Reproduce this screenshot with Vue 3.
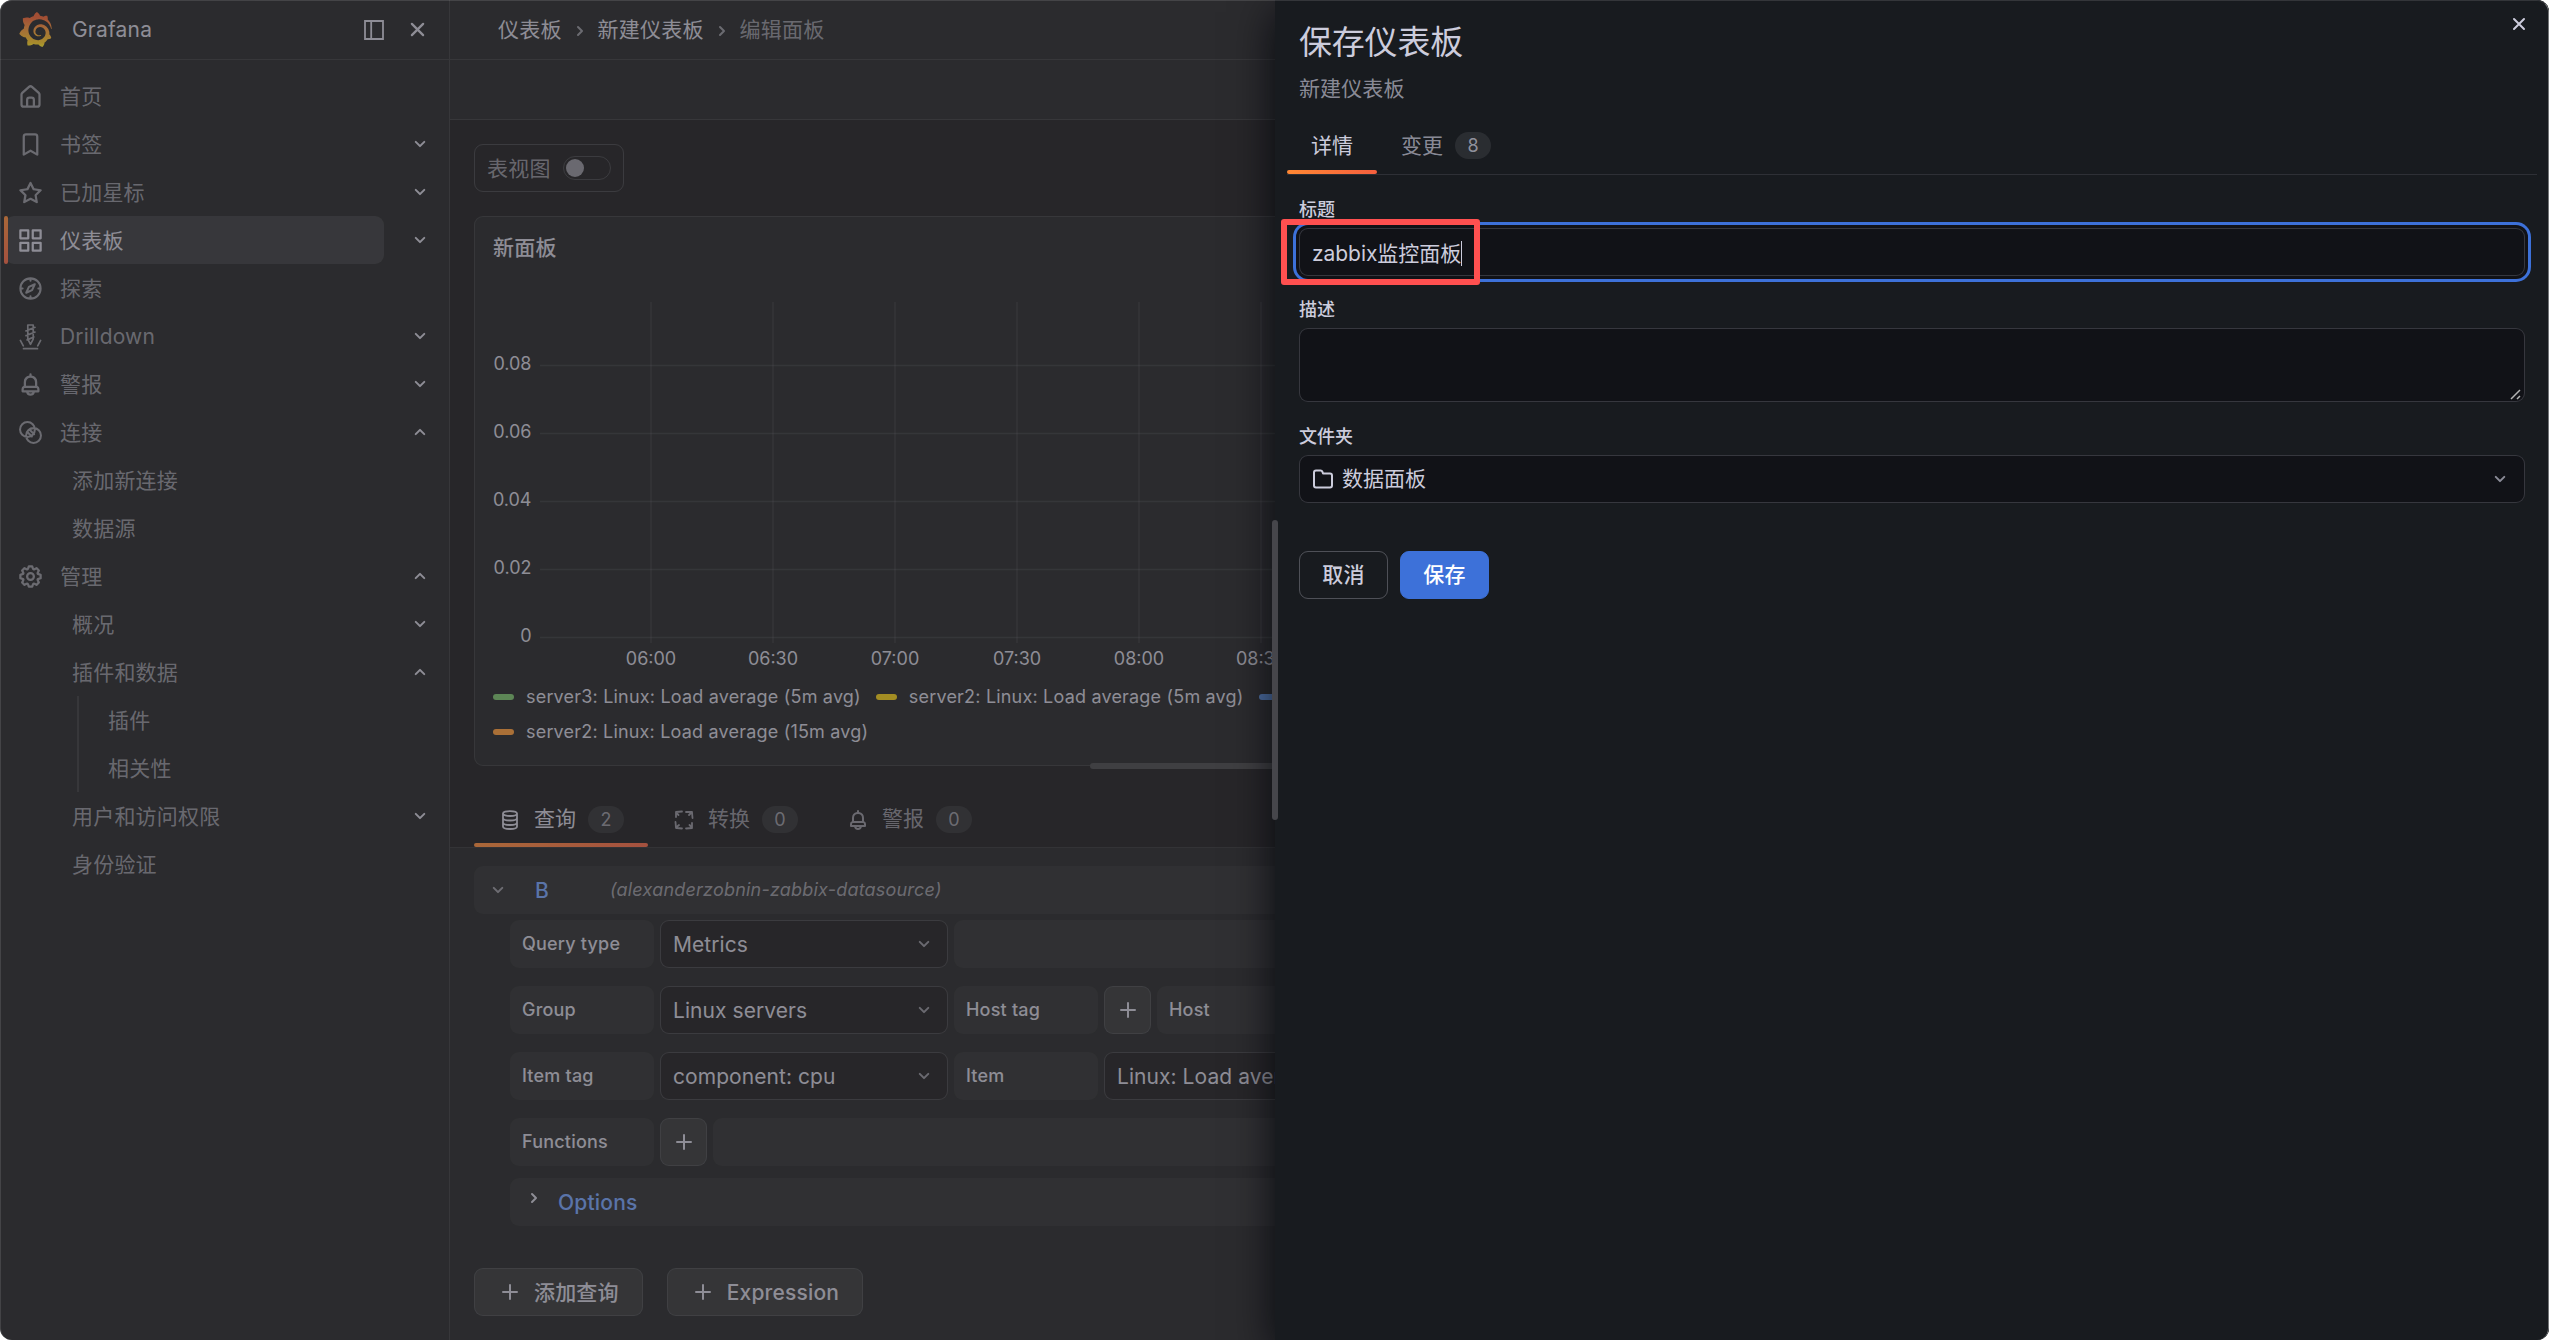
<template>
  <div class="window">
    <aside class="sidebar">
      <div class="brand">
        <svg class="logo" viewBox="0 0 24 24">
          <defs>
            <linearGradient id="logo-fill" x1="0" y1="1" x2="0" y2="0">
              <stop offset="0" stop-color="#fcee1f" />
              <stop offset="0.12" stop-color="#f9c81c" />
              <stop offset="0.55" stop-color="#f68c33" />
              <stop offset="0.85" stop-color="#f15a2b" />
              <stop offset="1" stop-color="#f05a28" />
            </linearGradient>
          </defs>
          <path fill="url(#logo-fill)" :d="logoPath" />
        </svg>
        <span class="brand-name">Grafana</span>
        <svg class="dock" viewBox="0 0 20 20">
          <path d="M1 1h18v18H1zM7.2 1v18" fill="none" stroke="currentColor" stroke-width="1.8" />
        </svg>
        <svg class="icon big" viewBox="0 0 24 24"><path class="line" d="M7 7l10 10M17 7L7 17" /></svg>
      </div>
      <nav class="nav">
        <div
          v-for="item in navItems"
          :key="item.label"
          class="nav-row"
          :class="['level-' + item.level, { active: item.active }]"
        >
          <div class="nav-link">
            <svg v-if="item.icon" class="icon big" viewBox="0 0 24 24">
              <path :class="icons[item.icon].cls || 'fill'" :d="icons[item.icon].d" />
            </svg>
            <span>{{ item.label }}</span>
          </div>
          <svg v-if="item.arrow" class="icon arrow" :class="item.arrow" viewBox="0 0 24 24">
            <path class="fill" :d="icons.angle.d" />
          </svg>
        </div>
      </nav>
    </aside>

    <main class="main">
      <div class="crumbs">
        <span>仪表板</span>
        <svg class="icon" viewBox="0 0 24 24"><path class="line" d="M10 8l4 4-4 4" /></svg>
        <span>新建仪表板</span>
        <svg class="icon" viewBox="0 0 24 24"><path class="line" d="M10 8l4 4-4 4" /></svg>
        <span class="current">编辑面板</span>
      </div>
      <div class="toolbar"></div>

      <div class="viz">
        <div class="table-view">
          <span>表视图</span>
          <i class="switch"></i>
        </div>
        <section class="panel">
          <h2>新面板</h2>
          <svg class="chart" width="1000" height="389">
            <line v-for="x in xTicks" :key="x.label" :x1="x.pos" :x2="x.pos" y1="12" y2="353" />
            <line v-for="y in yTicks" :key="y.label" x1="65" x2="1000" :y1="y.pos" :y2="y.pos" />
            <text v-for="y in yTicks" :key="y.label" x="56.5" :y="y.pos + 4.5" text-anchor="end">{{ y.label }}</text>
            <text v-for="x in xTicks" :key="x.label" :x="x.pos" y="375" text-anchor="middle">{{ x.label }}</text>
          </svg>
          <div class="legend">
            <div v-for="(row, i) in legend" :key="i" class="legend-row">
              <span v-for="s in row" :key="s.name" class="legend-item">
                <i :style="{ background: s.color }"></i>{{ s.name }}
              </span>
            </div>
          </div>
        </section>
        <div class="resizer"></div>
        <div class="tabs">
          <div v-for="t in tabs" :key="t.label" class="tab" :class="{ active: t.active }">
            <svg class="icon" viewBox="0 0 24 24">
              <path :class="icons[t.icon].cls || 'fill'" :d="icons[t.icon].d" />
            </svg>
            <span class="tab-label">{{ t.label }}</span>
            <span class="badge">{{ t.count }}</span>
          </div>
        </div>
      </div>

      <div class="queries">
        <div class="query-head">
          <svg class="icon" viewBox="0 0 24 24"><path class="fill" :d="icons.angle.d" /></svg>
          <span class="ref">B</span>
          <em>(alexanderzobnin-zabbix-datasource)</em>
        </div>
        <div class="query-body">
          <div v-for="(row, i) in rows" :key="i" class="q-row">
            <template v-for="(cell, j) in row" :key="j">
              <div v-if="cell.type === 'label'" class="q-label">{{ cell.text }}</div>
              <div v-else-if="cell.type === 'select'" class="q-select">
                <span>{{ cell.text }}</span>
                <svg class="icon" viewBox="0 0 24 24"><path class="fill" :d="icons.angle.d" /></svg>
              </div>
              <div v-else-if="cell.type === 'add'" class="q-add">
                <svg class="icon" viewBox="0 0 24 24"><path class="line" :d="icons.plus.d" /></svg>
              </div>
              <div v-else class="q-fill"></div>
            </template>
          </div>
          <div class="options">
            <svg class="icon" viewBox="0 0 24 24"><path class="line" d="M10 8l4 4-4 4" /></svg>
            <span>Options</span>
          </div>
        </div>
        <div class="actions">
          <button>
            <svg class="icon" viewBox="0 0 24 24"><path class="line" :d="icons.plus.d" /></svg>添加查询
          </button>
          <button>
            <svg class="icon" viewBox="0 0 24 24"><path class="line" :d="icons.plus.d" /></svg>Expression
          </button>
        </div>
      </div>
    </main>

    <div class="backdrop"></div>

    <section class="drawer">
      <svg class="icon close" viewBox="0 0 24 24"><path class="line" d="M7 7l10 10M17 7L7 17" /></svg>
      <h1>保存仪表板</h1>
      <p class="subtitle">新建仪表板</p>
      <div class="drawer-tabs">
        <div class="tab active"><span>详情</span></div>
        <div class="tab"><span>变更</span><span class="badge">8</span></div>
      </div>
      <div class="form">
        <label>标题</label>
        <div class="field title-field">
          <span>zabbix监控面板</span><i class="caret"></i>
          <div class="highlight"></div>
        </div>
        <label class="desc-label">描述</label>
        <div class="field desc-field">
          <svg class="grip" viewBox="0 0 12 12"><path d="M1 11L10 2M7 11l3-3" /></svg>
        </div>
        <label class="folder-label">文件夹</label>
        <div class="field folder-field">
          <svg class="icon" viewBox="0 0 24 24"><path class="fill" :d="icons.folder.d" /></svg>
          <span>数据面板</span>
          <svg class="icon chevron" viewBox="0 0 24 24"><path class="fill" :d="icons.angle.d" /></svg>
        </div>
        <div class="buttons">
          <button class="cancel">取消</button>
          <button class="save">保存</button>
        </div>
      </div>
      <div class="drag-handle"></div>
    </section>

    <div class="frame"></div>
  </div>
</template>

<script setup>
const logoPath = 'M23.02 10.59a8.578 8.578 0 0 0-.862-3.034 8.911 8.911 0 0 0-1.789-2.445c.337-1.342-.413-2.505-.413-2.505-1.292-.08-2.113.4-2.416.62-.052-.02-.102-.044-.154-.064-.22-.089-.446-.172-.677-.247-.231-.073-.47-.14-.711-.197a9.867 9.867 0 0 0-.875-.161C14.557.753 12.94 0 12.94 0c-1.804 1.145-2.147 2.744-2.147 2.744l-.018.093c-.098.029-.2.057-.298.088-.138.042-.275.094-.413.143-.138.055-.275.107-.41.166a8.869 8.869 0 0 0-1.557.87l-.063-.029c-2.497-.955-4.716.195-4.716.195-.203 2.658.996 4.33 1.235 4.636a11.608 11.608 0 0 0-.607 2.635C1.636 12.677.953 15.014.953 15.014c1.926 2.214 4.171 2.351 4.171 2.351.003-.002.006-.002.006-.005.285.509.615.994.986 1.446.156.19.32.371.488.548-.704 2.009.099 3.68.099 3.68 2.144.08 3.553-.937 3.849-1.173a9.784 9.784 0 0 0 3.164.501h.08l.055-.003.107-.002.103-.005.003.002c1.01 1.44 2.788 1.646 2.788 1.646 1.264-1.332 1.337-2.653 1.337-2.94v-.058c0-.02-.003-.039-.003-.06.265-.187.52-.387.758-.6a7.875 7.875 0 0 0 1.415-1.7c1.43.083 2.437-.885 2.437-.885-.236-1.49-1.085-2.216-1.264-2.354l-.018-.013-.016-.013a.217.217 0 0 1-.031-.02c.008-.092.016-.18.02-.27.011-.162.016-.323.016-.48v-.253l-.005-.098-.008-.135a1.891 1.891 0 0 0-.01-.13c-.003-.042-.008-.083-.013-.125l-.016-.124-.018-.122a6.215 6.215 0 0 0-2.032-3.73 6.015 6.015 0 0 0-3.222-1.46 6.292 6.292 0 0 0-.85-.048l-.107.002h-.063l-.044.003-.104.008a4.777 4.777 0 0 0-3.335 1.695c-.332.4-.592.84-.768 1.297a4.594 4.594 0 0 0-.312 1.817l.003.091c.005.055.007.11.013.164a3.615 3.615 0 0 0 .698 1.82 3.53 3.53 0 0 0 1.827 1.282c.33.098.66.14.971.137.039 0 .078 0 .114-.002l.063-.003c.02 0 .041-.003.062-.003.034-.002.065-.007.099-.01.007 0 .018-.003.028-.003l.031-.005.06-.008a1.18 1.18 0 0 0 .112-.02c.036-.008.072-.013.109-.024a2.634 2.634 0 0 0 .914-.415c.028-.02.056-.041.085-.065a.248.248 0 0 0 .039-.35.244.244 0 0 0-.309-.06l-.078.042c-.09.044-.184.083-.283.116a2.476 2.476 0 0 1-.475.096c-.028.003-.054.006-.083.006l-.083.002c-.026 0-.054 0-.08-.002l-.102-.006h-.012l-.024.006c-.016-.003-.031-.003-.044-.006-.031-.002-.06-.007-.091-.01a2.59 2.59 0 0 1-.724-.213 2.557 2.557 0 0 1-.667-.438 2.52 2.52 0 0 1-.805-1.475 2.306 2.306 0 0 1-.029-.444l.006-.122v-.023l.002-.031c.003-.021.003-.04.005-.06a3.163 3.163 0 0 1 1.352-2.29 3.12 3.12 0 0 1 .937-.43 2.946 2.946 0 0 1 .776-.101h.06l.07.002.045.003h.026l.07.005a4.041 4.041 0 0 1 1.635.49 3.94 3.94 0 0 1 1.602 1.662 3.77 3.77 0 0 1 .397 1.414l.005.076.003.075c.002.026.002.05.002.075 0 .024.003.052 0 .07v.065l-.002.073-.008.174a6.195 6.195 0 0 1-.08.639 5.1 5.1 0 0 1-.267.927 5.31 5.31 0 0 1-.624 1.13 5.052 5.052 0 0 1-3.237 2.014 4.82 4.82 0 0 1-.649.066l-.039.003h-.287a6.607 6.607 0 0 1-1.716-.265 6.776 6.776 0 0 1-3.4-2.274 6.75 6.75 0 0 1-.746-1.15 6.616 6.616 0 0 1-.714-2.596l-.005-.083-.002-.02v-.056l-.003-.073v-.096l-.003-.104v-.07l.003-.163c.008-.22.026-.45.054-.678a8.707 8.707 0 0 1 .28-1.355c.128-.444.286-.872.473-1.277a7.04 7.04 0 0 1 1.456-2.1 5.925 5.925 0 0 1 .953-.763c.169-.111.343-.213.524-.306.089-.05.182-.091.273-.135.047-.02.093-.042.138-.062a7.177 7.177 0 0 1 .714-.267l.145-.045c.049-.015.098-.026.148-.041.098-.029.197-.052.296-.076.049-.013.1-.02.15-.033l.15-.032.151-.028.076-.013.075-.01.153-.024c.057-.01.114-.013.171-.023l.169-.021c.036-.003.073-.008.106-.01l.073-.008.036-.003.042-.002c.057-.003.114-.008.171-.01l.086-.006h.023l.037-.003.145-.007a7.999 7.999 0 0 1 1.708.125 7.917 7.917 0 0 1 2.048.68 8.253 8.253 0 0 1 1.672 1.09l.09.077.089.078c.06.052.114.107.171.159.057.052.112.106.166.16.052.055.107.107.159.164a8.671 8.671 0 0 1 1.41 1.978c.012.026.028.052.04.078l.04.078.075.156c.023.051.05.1.07.153l.065.15a8.848 8.848 0 0 1 .45 1.34.19.19 0 0 0 .201.142.186.186 0 0 0 .172-.184c.01-.246.002-.532-.024-.856z'

const icons = {
  angle: { d: 'M17,9.17a1,1,0,0,0-1.41,0L12,12.71,8.46,9.17a1,1,0,0,0-1.41,0,1,1,0,0,0,0,1.42l4.24,4.24a1,1,0,0,0,1.42,0L17,10.59A1,1,0,0,0,17,9.17Z' },
  home: { d: 'M20,8h0L14,2.74a3,3,0,0,0-4,0L4,8a3,3,0,0,0-1,2.26V19a3,3,0,0,0,3,3H18a3,3,0,0,0,3-3V10.25A3,3,0,0,0,20,8ZM14,20H10V15a1,1,0,0,1,1-1h2a1,1,0,0,1,1,1Zm5-1a1,1,0,0,1-1,1H16V15a3,3,0,0,0-3-3H11a3,3,0,0,0-3,3v5H6a1,1,0,0,1-1-1V10.25a1,1,0,0,1,.34-.75l6-5.25a1,1,0,0,1,1.32,0l6,5.25a1,1,0,0,1,.34.75Z' },
  bookmark: { d: 'M16,2H8A3,3,0,0,0,5,5V21a1,1,0,0,0,.5.87,1,1,0,0,0,1,0L12,18.69l5.5,3.18A1,1,0,0,0,18,22a1,1,0,0,0,.5-.13A1,1,0,0,0,19,21V5A3,3,0,0,0,16,2Zm1,17.27-4.5-2.6a1,1,0,0,0-1,0L7,19.27V5A1,1,0,0,1,8,4h8a1,1,0,0,1,1,1Z' },
  star: { d: 'M22,9.67A1,1,0,0,0,21.14,9l-5.69-.83L12.9,3a1,1,0,0,0-1.8,0L8.55,8.16,2.86,9a1,1,0,0,0-.81.68,1,1,0,0,0,.25,1l4.13,4-1,5.68A1,1,0,0,0,6.9,21.44L12,18.77l5.1,2.67a.93.93,0,0,0,.46.12,1,1,0,0,0,.59-.19,1,1,0,0,0,.4-1l-1-5.68,4.13-4A1,1,0,0,0,22,9.67Zm-6.15,4a1,1,0,0,0-.29.88l.72,4.2-3.76-2a1.06,1.06,0,0,0-.94,0l-3.76,2,.72-4.2a1,1,0,0,0-.29-.88l-3-3,4.21-.61a1,1,0,0,0,.76-.55L12,5.7l1.88,3.82a1,1,0,0,0,.76.55l4.21.61Z' },
  apps: { d: 'M10,13H3a1,1,0,0,0-1,1v7a1,1,0,0,0,1,1h7a1,1,0,0,0,1-1V14A1,1,0,0,0,10,13ZM9,20H4V15H9ZM21,2H14a1,1,0,0,0-1,1v7a1,1,0,0,0,1,1h7a1,1,0,0,0,1-1V3A1,1,0,0,0,21,2ZM20,9H15V4h5Zm1,4H14a1,1,0,0,0-1,1v7a1,1,0,0,0,1,1h7a1,1,0,0,0,1-1V14A1,1,0,0,0,21,13Zm-1,7H15V15h5ZM10,2H3A1,1,0,0,0,2,3v7a1,1,0,0,0,1,1h7a1,1,0,0,0,1-1V3A1,1,0,0,0,10,2ZM9,9H4V4H9Z' },
  compass: { cls: 'line mid', d: 'M21 12a9 9 0 1 1-18 0a9 9 0 1 1 18 0M12 3v2M12 19v2M3 12h2M19 12h2M15.8 8.2l-5.2 2.4-2.4 5.2 5.2-2.4z' },
  drill: { cls: 'line thin', d: 'M9.6 1.8h4.8v12.6L12 19l-2.4-4.6zM8 7l8-3.2M8 11.2l8-3.2M9 15l6-2.6M3 15.5l2.6 4.8M21 15.5l-2.6 4.8M5.8 22.8h12.4' },
  bell: { d: 'M18,13.18V10a6,6,0,0,0-5-5.91V3a1,1,0,0,0-2,0V4.09A6,6,0,0,0,6,10v3.18A3,3,0,0,0,4,16v2a1,1,0,0,0,1,1H8.14a4,4,0,0,0,7.72,0H19a1,1,0,0,0,1-1V16A3,3,0,0,0,18,13.18ZM8,10a4,4,0,0,1,8,0v3H8Zm4,10a2,2,0,0,1-1.72-1h3.44A2,2,0,0,1,12,20Zm6-3H6V16a1,1,0,0,1,1-1H17a1,1,0,0,1,1,1Z' },
  link: { cls: 'line mid', d: 'M15.9 9.3a6.6 6.6 0 1 1-13.2 0a6.6 6.6 0 1 1 13.2 0M21.3 14.7a6.6 6.6 0 1 1-13.2 0a6.6 6.6 0 1 1 13.2 0M11 9.3l4.2 4.2M9 11.4l4.2 4.2' },
  cog: { d: 'M21.32,9.55l-1.89-.63.89-1.78A1,1,0,0,0,20.13,6L18,3.87a1,1,0,0,0-1.15-.19l-1.78.89-.63-1.89A1,1,0,0,0,13.5,2h-3a1,1,0,0,0-.95.68L8.92,4.57,7.14,3.68A1,1,0,0,0,6,3.87L3.87,6a1,1,0,0,0-.19,1.15l.89,1.78-1.89.63A1,1,0,0,0,2,10.5v3a1,1,0,0,0,.68.95l1.89.63-.89,1.78A1,1,0,0,0,3.87,18L6,20.13a1,1,0,0,0,1.15.19l1.78-.89.63,1.89a1,1,0,0,0,.95.68h3a1,1,0,0,0,.95-.68l.63-1.89,1.78.89A1,1,0,0,0,18,20.13L20.13,18a1,1,0,0,0,.19-1.15l-.89-1.78,1.89-.63A1,1,0,0,0,22,13.5v-3A1,1,0,0,0,21.32,9.55ZM20,12.78l-1.2.4A2,2,0,0,0,17.64,16l.57,1.14-1.1,1.1L16,17.64a2,2,0,0,0-2.79,1.16l-.4,1.2H11.22l-.4-1.2A2,2,0,0,0,8,17.64l-1.14.57-1.1-1.1L6.36,16A2,2,0,0,0,5.2,13.18L4,12.78V11.22l1.2-.4A2,2,0,0,0,6.36,8L5.79,6.89l1.1-1.1L8,6.36A2,2,0,0,0,10.82,5.2l.4-1.2h1.56l.4,1.2A2,2,0,0,0,16,6.36l1.14-.57,1.1,1.1L17.64,8a2,2,0,0,0,1.16,2.79l1.2.4ZM12,8a4,4,0,1,0,4,4A4,4,0,0,0,12,8Zm0,6a2,2,0,1,1,2-2A2,2,0,0,1,12,14Z' },
  database: { cls: 'line mid', d: 'M5 5.5c0-3.3 14-3.3 14 0s-14 3.3-14 0v13c0 3.3 14 3.3 14 0v-13M5 10c0 3.3 14 3.3 14 0M5 14.5c0 3.3 14 3.3 14 0' },
  process: { cls: 'line mid', d: 'M10 3.5L4 4v5M4 4.5l2.5 2.5M14 4l6 0M20.5 10l-.5-6M17 7l3-3M14 20.5l6-.5v-5M20 19.5l-2.5-2.5M10 20.5l-5-.5M3.5 14l.5 6M4 19.5l3-2.5' },
  folder: { d: 'M19,5.5H12.72l-.32-1a3,3,0,0,0-2.84-2H5a3,3,0,0,0-3,3v13a3,3,0,0,0,3,3H19a3,3,0,0,0,3-3V8.5A3,3,0,0,0,19,5.5Zm1,13a1,1,0,0,1-1,1H5a1,1,0,0,1-1-1V5.5a1,1,0,0,1,1-1H9.56a1,1,0,0,1,.95.68l.54,1.64A1,1,0,0,0,12,7.5h7a1,1,0,0,1,1,1Z' },
  plus: { d: 'M12 5v14M5 12h14' }
}

const navItems = [
  { label: '首页', icon: 'home', level: 1 },
  { label: '书签', icon: 'bookmark', level: 1, arrow: 'down' },
  { label: '已加星标', icon: 'star', level: 1, arrow: 'down' },
  { label: '仪表板', icon: 'apps', level: 1, arrow: 'down', active: true },
  { label: '探索', icon: 'compass', level: 1 },
  { label: 'Drilldown', icon: 'drill', level: 1, arrow: 'down' },
  { label: '警报', icon: 'bell', level: 1, arrow: 'down' },
  { label: '连接', icon: 'link', level: 1, arrow: 'up' },
  { label: '添加新连接', level: 2 },
  { label: '数据源', level: 2 },
  { label: '管理', icon: 'cog', level: 1, arrow: 'up' },
  { label: '概况', level: 2, arrow: 'down' },
  { label: '插件和数据', level: 2, arrow: 'up' },
  { label: '插件', level: 3 },
  { label: '相关性', level: 3 },
  { label: '用户和访问权限', level: 2, arrow: 'down' },
  { label: '身份验证', level: 2 }
]

const xTicks = ['06:00', '06:30', '07:00', '07:30', '08:00', '08:30'].map((label, i) => ({
  label,
  pos: 176 + i * 122
}))
const yTicks = ['0.08', '0.06', '0.04', '0.02', '0'].map((label, i) => ({
  label,
  pos: 75.5 + i * 68
}))

const legend = [
  [
    { name: 'server3: Linux: Load average (5m avg)', color: '#73bf69' },
    { name: 'server2: Linux: Load average (5m avg)', color: '#f2cc0c' },
    { name: 'server3: Linux: Load average (15m avg)', color: '#5794f2' }
  ],
  [{ name: 'server2: Linux: Load average (15m avg)', color: '#ff9830' }]
]

const tabs = [
  { label: '查询', icon: 'database', count: 2, active: true },
  { label: '转换', icon: 'process', count: 0 },
  { label: '警报', icon: 'bell', count: 0 }
]

const label = text => ({ type: 'label', text })
const select = text => ({ type: 'select', text })
const add = { type: 'add' }
const fill = { type: 'fill' }

const rows = [
  [label('Query type'), select('Metrics'), fill],
  [label('Group'), select('Linux servers'), label('Host tag'), add, label('Host'), fill],
  [label('Item tag'), select('component: cpu'), label('Item'), select('Linux: Load average'), fill],
  [label('Functions'), add, fill]
]
</script>

<style>
body {
  margin: 0;
  background: #fff;
}
</style>

<style scoped>
.window {
  position: relative;
  display: flex;
  width: 2549px;
  height: 1340px;
  border-radius: 12px;
  overflow: hidden;
  background: #181b1f;
  color: #ccccdc;
  font-family: Inter, "Noto Sans CJK SC", sans-serif;
  font-size: 21px;
  line-height: 33px;
  letter-spacing: 0.2px;
}

.window * {
  box-sizing: border-box;
}

.icon {
  width: 24px;
  height: 24px;
  flex: none;
}

.icon.big {
  width: 27px;
  height: 27px;
}

.fill {
  fill: currentColor;
}

.line {
  fill: none;
  stroke: currentColor;
  stroke-width: 2;
  stroke-linecap: round;
  stroke-linejoin: round;
}

.mid {
  stroke-width: 1.8;
}

.thin {
  stroke-width: 1.5;
}

.sidebar {
  width: 450px;
  flex: none;
  border-right: 1px solid rgba(204, 204, 220, 0.12);
}

.brand {
  display: flex;
  align-items: center;
  height: 60px;
  padding: 0 18px;
  border-bottom: 1px solid rgba(204, 204, 220, 0.12);
}

.logo {
  width: 35px;
  height: 35px;
}

.brand-name {
  flex: 1;
  margin-left: 19px;
}

.dock {
  width: 20px;
  height: 20px;
  margin-right: 20px;
}

.nav {
  padding-top: 12px;
}

.nav-row {
  display: flex;
  align-items: center;
  height: 48px;
  color: rgba(204, 204, 220, 0.65);
}

.nav-link {
  position: relative;
  display: flex;
  align-items: center;
  width: 379px;
  height: 48px;
  margin-left: 5px;
  padding-left: 11.5px;
  border-radius: 9px;
}

.nav-link .icon {
  margin-right: 16.5px;
}

.level-2 .nav-link {
  padding-left: 67px;
}

.level-3 .nav-link {
  width: 307px;
  margin-left: 77px;
  padding-left: 29px;
  border-left: 2px solid rgba(204, 204, 220, 0.12);
  border-radius: 0;
}

.active .nav-link {
  background: rgba(204, 204, 220, 0.13);
  color: #ccccdc;
}

.active .nav-link::before {
  content: "";
  position: absolute;
  left: -1px;
  top: 0;
  width: 4px;
  height: 48px;
  border-radius: 2px;
  background: linear-gradient(#ff8833, #f55f3e);
}

.arrow {
  margin-left: 24px;
  color: #ccccdc;
}

.arrow.up {
  transform: rotate(180deg);
}

.main {
  flex: 1;
  min-width: 0;
}

.crumbs {
  display: flex;
  align-items: center;
  height: 60px;
  padding-left: 48px;
  border-bottom: 1px solid rgba(204, 204, 220, 0.12);
}

.crumbs span {
  margin-top: -1px;
}

.crumbs .icon {
  margin: 2px 6px 0;
}

.crumbs .current,
.crumbs .icon {
  color: rgba(204, 204, 220, 0.65);
}

.toolbar {
  height: 60px;
  border-bottom: 1px solid rgba(204, 204, 220, 0.12);
}

.viz {
  height: 728px;
  padding: 24px 0 0;
  background: #111217;
  border-bottom: 1px solid rgba(204, 204, 220, 0.12);
}

.table-view {
  display: flex;
  align-items: center;
  justify-content: space-between;
  width: 150px;
  height: 48px;
  margin-left: 24px;
  padding: 0 12px;
  border: 1px solid rgba(204, 204, 220, 0.2);
  border-radius: 9px;
  color: rgba(204, 204, 220, 0.65);
}

.switch {
  width: 48px;
  height: 24px;
  padding: 2px;
  border: 1px solid rgba(204, 204, 220, 0.2);
  border-radius: 12px;
}

.switch::before {
  content: "";
  display: block;
  width: 18px;
  height: 18px;
  border-radius: 50%;
  background: rgba(204, 204, 220, 0.65);
}

.panel {
  height: 550px;
  margin: 24px 0 0 24px;
  background: #181b1f;
  border: 1px solid rgba(204, 204, 220, 0.12);
  border-radius: 9px;
  overflow: hidden;
}

.panel h2 {
  height: 73px;
  margin: 0;
  padding: 14px 0 0 18px;
  font-size: 21px;
  font-weight: 500;
}

.chart {
  display: block;
}

.chart line {
  stroke: rgba(204, 204, 220, 0.11);
  stroke-width: 1.4;
}

.chart text {
  fill: #ccccdc;
  font-size: 18px;
  letter-spacing: 0;
}

.legend-row {
  display: flex;
  height: 35px;
  padding-left: 18px;
  font-size: 18px;
  line-height: 34px;
  letter-spacing: 0.19px;
  white-space: nowrap;
}

.legend-item {
  display: flex;
  align-items: center;
  margin-right: 15px;
}

.legend-item i {
  width: 21px;
  height: 6px;
  margin-right: 12px;
  border-radius: 3px;
}

.resizer {
  width: 300px;
  height: 6px;
  margin: -3px 0 0 640px;
  position: relative;
  border-radius: 3px;
  background: #3d3e44;
}

.tabs {
  display: flex;
  margin-left: 24px;
  padding-top: 18px;
}

.tab {
  position: relative;
  display: flex;
  align-items: center;
  padding: 0 24px;
  color: rgba(204, 204, 220, 0.65);
  white-space: nowrap;
}

.tabs .tab {
  width: 174px;
  height: 60px;
  padding-top: 5px;
  letter-spacing: 0;
}

.tab-label {
  flex: none;
  margin-top: -2px;
  margin-left: 12px;
}

.tab.active {
  color: #ccccdc;
}

.tab.active::after {
  content: "";
  position: absolute;
  left: 0;
  right: 0;
  bottom: 0;
  height: 4px;
  border-radius: 2px;
  background: linear-gradient(90deg, #ff8833, #f55f3e);
}

.badge {
  flex: none;
  width: 36px;
  height: 27px;
  margin-left: 12px;
  border-radius: 14px;
  background: rgba(204, 204, 220, 0.1);
  color: rgba(204, 204, 220, 0.65);
  font-size: 18px;
  line-height: 27px;
  letter-spacing: 0;
  text-align: center;
}

.tabs .badge {
  margin-top: -1px;
}

.queries {
  padding: 18px 0 0 24px;
}

.query-head {
  display: flex;
  align-items: center;
  height: 48px;
  padding-left: 12px;
  border-radius: 9px;
  background: #222428;
  color: rgba(204, 204, 220, 0.65);
}

.ref {
  width: 75px;
  margin-left: 25px;
  color: #6e9fff;
  font-weight: 500;
}

.query-head em {
  margin-top: -1px;
  font-size: 18px;
}

.query-body {
  padding: 6px 0 0 36px;
}

.q-row {
  display: flex;
  gap: 6px;
  height: 48px;
  margin-bottom: 18px;
}

.q-label {
  width: 144px;
  padding-left: 12px;
  border-radius: 9px;
  background: #222428;
  font-size: 18px;
  font-weight: 500;
  line-height: 48px;
}

.q-select {
  display: flex;
  align-items: center;
  justify-content: space-between;
  width: 288px;
  padding: 0 11px 0 12px;
  border: 1px solid rgba(204, 204, 220, 0.2);
  border-radius: 9px;
  background: #111217;
  letter-spacing: 0.06px;
}

.q-select .icon {
  color: rgba(204, 204, 220, 0.65);
}

.q-add {
  display: flex;
  align-items: center;
  justify-content: center;
  width: 47px;
  border: 1px solid rgba(204, 204, 220, 0.12);
  border-radius: 9px;
  background: rgba(204, 204, 220, 0.1);
}

.q-fill {
  flex: 1;
  border-radius: 9px;
  background: #222428;
}

.options {
  display: flex;
  align-items: center;
  height: 48px;
  margin-top: -6px;
  padding-left: 12px;
  border-radius: 9px;
  background: #222428;
}

.options .icon {
  margin-top: -8px;
}

.options span {
  margin-left: 12px;
  color: #6e9fff;
  font-weight: 500;
}

.actions {
  display: flex;
  gap: 24px;
  margin-top: 42px;
}

button {
  display: flex;
  align-items: center;
  justify-content: center;
  height: 48px;
  padding: 0 23px;
  border: 1px solid rgba(204, 204, 220, 0.12);
  border-radius: 9px;
  background: rgba(204, 204, 220, 0.1);
  color: #ccccdc;
  font: inherit;
  font-weight: 500;
  letter-spacing: 0.18px;
}

.actions .icon {
  margin-right: 12px;
}

.backdrop {
  position: absolute;
  inset: 0;
  background: rgba(67, 64, 64, 0.45);
}

.drawer {
  position: absolute;
  top: 0;
  right: 0;
  bottom: 0;
  width: 1274px;
  padding: 18px 12px 0;
  background: #181b1f;
  box-shadow: 0 12px 40px rgba(1, 4, 9, 0.85);
}

.close {
  position: absolute;
  top: 12px;
  right: 18px;
}

.drawer h1 {
  margin: 0 0 0 12px;
  font-size: 33px;
  font-weight: 400;
  line-height: 48px;
  letter-spacing: -0.2px;
}

.subtitle {
  margin: 6px 0 0 12px;
  color: rgba(204, 204, 220, 0.65);
  letter-spacing: 0.1px;
}

.drawer-tabs {
  display: flex;
  height: 61px;
  margin-top: 9px;
  border-bottom: 1px solid rgba(204, 204, 220, 0.12);
  letter-spacing: 0;
}

.drawer-tabs .tab {
  padding-top: 2px;
}

.form {
  padding: 21px 12px 0;
}

label {
  display: block;
  height: 27px;
  margin-bottom: 5px;
  font-size: 18px;
  font-weight: 500;
  line-height: 27px;
  letter-spacing: 0;
}

.field {
  position: relative;
  display: flex;
  align-items: center;
  height: 48px;
  padding: 0 12px;
  border: 1px solid rgba(204, 204, 220, 0.2);
  border-radius: 9px;
  background: #111217;
  letter-spacing: 0;
}

.title-field {
  box-shadow: 0 0 0 3px #111217, 0 0 0 6px #3d71d9;
}

.title-field span {
  padding-top: 2px;
  letter-spacing: -0.05px;
}

.caret {
  width: 1px;
  height: 25px;
  margin-top: 2px;
  background: #ccccdc;
}

.highlight {
  position: absolute;
  left: -19px;
  top: -10px;
  width: 199px;
  height: 66px;
  border: 6px solid #ff5050;
  border-radius: 3px;
}

.desc-label {
  margin-top: 20px;
}

.desc-field {
  height: 74px;
}

.grip {
  position: absolute;
  right: 2px;
  bottom: 1px;
  width: 12px;
  height: 12px;
  fill: none;
  stroke: #b4b4b4;
  stroke-width: 1.5;
}

.folder-label {
  margin-top: 21px;
}

.folder-field .icon:first-child {
  margin-left: -1px;
}

.folder-field span {
  margin-top: -2px;
  margin-left: 7px;
}

.chevron {
  margin-left: auto;
  color: rgba(204, 204, 220, 0.65);
}

.buttons {
  display: flex;
  gap: 12px;
  margin-top: 48px;
}

.buttons button {
  width: 89px;
  padding: 0 0 2px;
}

.cancel {
  border-color: rgba(204, 204, 220, 0.3);
  background: transparent;
}

.save {
  border-color: #3d71d9;
  background: #3d71d9;
  color: #fff;
}

.drag-handle {
  position: absolute;
  left: -3px;
  top: 520px;
  width: 6px;
  height: 300px;
  border-radius: 3px;
  background: #46464b;
}

.frame {
  position: absolute;
  inset: 0;
  border: 1px solid rgba(255, 255, 255, 0.12);
  border-right-color: rgba(255, 255, 255, 0.4);
  border-bottom: 0;
  border-radius: 12px;
}
</style>
